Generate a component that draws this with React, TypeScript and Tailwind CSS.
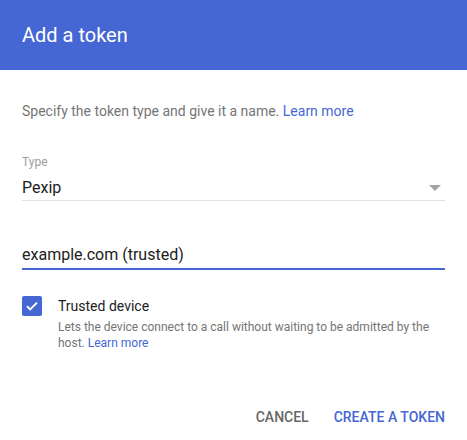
export default function App() {
  return (
    <div className="w-[467px] h-[440px] bg-white font-['Roboto',sans-serif] overflow-hidden">
      <div className="h-[70px] bg-[#4567d3] flex items-center px-[22px]">
        <h1 className="text-[20px] leading-[28px] text-white font-normal">Add a token</h1>
      </div>

      <div className="px-[22px]">
        <p className="mt-[31px] text-[14px] leading-[20px] text-[#757575]">
          Specify the token type and give it a name.{' '}
          <a className="text-[#4567d3]">Learn more</a>
        </p>

        <div className="mt-[33px]">
          <div className="text-[12px] leading-[16px] text-[#9e9e9e]">Type</div>
          <div className="mt-[6px] flex items-center justify-between border-b border-[#e0e0e0]">
            <span className="text-[16px] leading-[24px] text-[#212121]">Pexip</span>
            <svg width="12" height="6" viewBox="0 0 12 6" className="mr-[4px]">
              <path d="M0 0h12L6 6z" fill="#a3a3a3" />
            </svg>
          </div>
        </div>

        <div className="mt-[42px] border-b-2 border-[#4567d3] pb-[1px]">
          <span className="text-[16px] leading-[24px] text-[#212121]">example.com (trusted)</span>
        </div>

        <div className="mt-[26px] flex gap-[16px]">
          <div className="w-[20px] h-[20px] shrink-0 rounded-[2px] bg-[#4567d3] flex items-center justify-center">
            <svg width="14" height="14" viewBox="0 0 14 14">
              <path d="M2 7.2l3.2 3.2L12 3.6" stroke="white" strokeWidth="2" fill="none" />
            </svg>
          </div>
          <div>
            <div className="text-[14px] leading-[20px] text-[#212121]">Trusted device</div>
            <p className="mt-[3px] text-[12px] leading-[16px] text-[#757575]">
              Lets the device connect to a call without waiting to be admitted by the host.{' '}
              <a className="text-[#4567d3]">Learn more</a>
            </p>
          </div>
        </div>

        <div className="mt-[56px] flex justify-end gap-[25px]">
          <button className="text-[14px] leading-[20px] font-medium text-[#666666] uppercase">Cancel</button>
          <button className="text-[14px] leading-[20px] font-medium text-[#4567d3] uppercase">Create a token</button>
        </div>
      </div>
    </div>
  )
}
